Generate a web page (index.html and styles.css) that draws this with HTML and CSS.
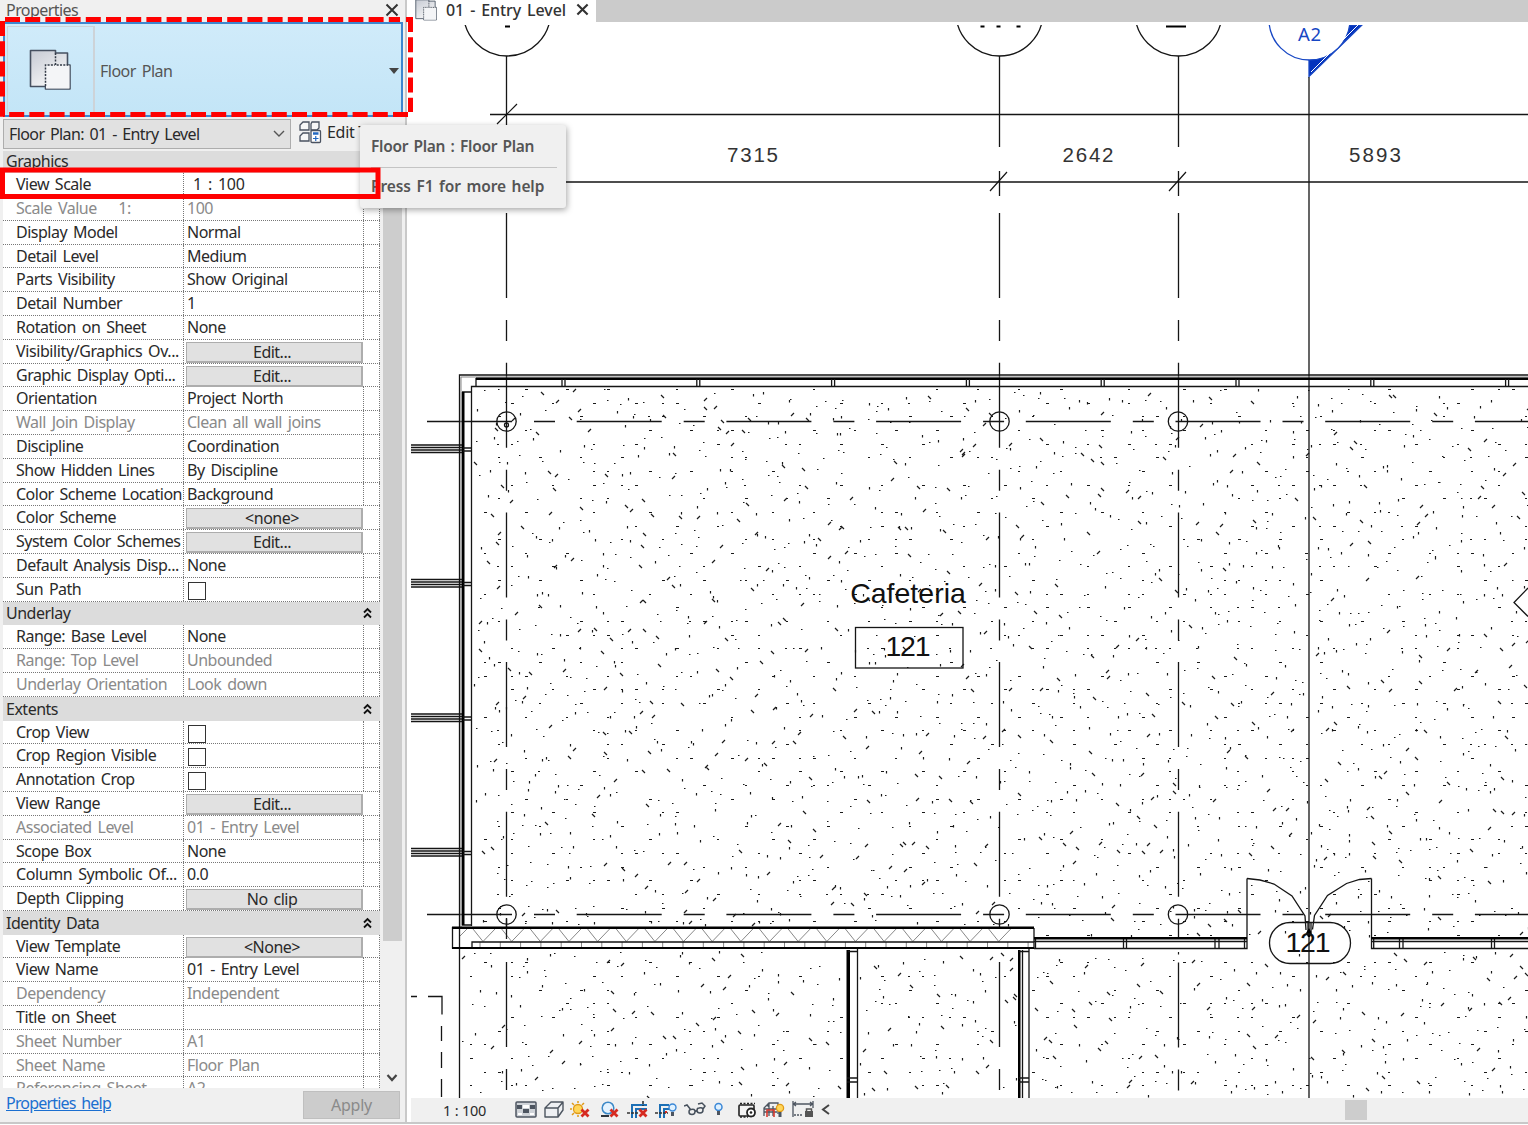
FILE: index.html
```html
<!DOCTYPE html>
<html lang="en">
<head>
<meta charset="utf-8">
<title>01 - Entry Level</title>
<link rel="stylesheet" href="styles.css">
</head>
<body>
<svg width="0" height="0" class="defs">
  <defs>
    <linearGradient id="sheet" x1="0" y1="0" x2="0.6" y2="1"><stop offset="0" stop-color="#c6cad3"/><stop offset="1" stop-color="#fafafa"/></linearGradient>
    <symbol id="plan" viewBox="0 0 42 42">
      <path d="M1.500 1.500h25v2.500h12v12h2.500v24h-24.500v-2.500h-15z" fill="url(#sheet)" stroke="#465060" stroke-width="1.600" stroke-linejoin="round"/>
      <path d="M17 16.500h23.500v23h-23.500z" fill="#f4f5f7"/>
      <path d="M26.500 4v12H39M16.500 37V16H26" fill="none" stroke="#343c48" stroke-width="1.500" stroke-dasharray="2 1.300"/>
    </symbol>
    <symbol id="up" viewBox="0 0 9 12"><path d="M1 5.500l3.500-3.500L8 5.500M1 10.500l3.500-3.500L8 10.500" fill="none" stroke="#111" stroke-width="1.800"/></symbol>
    <symbol id="redx" viewBox="0 0 10 10"><path d="M1.500 1.500l7 7m0-7l-7 7" stroke="#d62a20" stroke-width="2.800"/></symbol>
  </defs>
</svg>
<div class="app">
  <aside class="palette">
    <header class="palette-title"><span>Properties</span>
      <svg width="14" height="14" viewBox="0 0 14 14"><path d="M1.500 1.500l11 11m0-11l-11 11" stroke="#333" stroke-width="2"/></svg>
    </header>
    <div class="type-selector">
      <div class="type-thumb"><svg width="42" height="42"><use href="#plan"/></svg></div>
      <span class="type-name">Floor Plan</span>
      <i class="caret"></i>
    </div>
    <div class="instance-bar">
      <div class="combo"><span>Floor Plan: 01 - Entry Level</span><svg width="12" height="8" viewBox="0 0 12 8"><path d="M1 1l5 5 5-5" fill="none" stroke="#555" stroke-width="1.400"/></svg></div>
      <div class="edit-type">
        <svg width="23" height="23" viewBox="0 0 23 23"><path d="M4 1h6v8H1V4zM13 1h7v6l-2 2h-6V3zM4 12h6v8H1v-5z" fill="#f7f7f7" stroke="#4a5260" stroke-width="1.300"/><rect x="12" y="9.500" width="9.500" height="12" rx="1" fill="#fff" stroke="#4a5260" stroke-width="1.300"/><path d="M14 12.500h5.500" stroke="#2468c0" stroke-width="2.500"/><path d="M14 17.500h5.500M16.750 15v5" stroke="#2468c0" stroke-width="1.200"/></svg>
        <span>Edit Type</span>
      </div>
    </div>
    <div class="grid-area">
      <div class="grid">
        <div class="group first"><span>Graphics</span></div>
        <div class="row"><b>View Scale</b><span class="inset">1 : 100</span><i></i></div>
        <div class="row off"><b class="pre">Scale Value   <em>1:</em></b><span>100</span><i></i></div>
        <div class="row"><b>Display Model</b><span>Normal</span><i></i></div>
        <div class="row"><b>Detail Level</b><span>Medium</span><i></i></div>
        <div class="row"><b>Parts Visibility</b><span>Show Original</span><i></i></div>
        <div class="row"><b>Detail Number</b><span>1</span><i></i></div>
        <div class="row"><b>Rotation on Sheet</b><span>None</span><i></i></div>
        <div class="row"><b class="wide">Visibility/Graphics Ov...</b><span class="btn">Edit...</span><i></i></div>
        <div class="row"><b>Graphic Display Opti...</b><span class="btn">Edit...</span><i></i></div>
        <div class="row"><b>Orientation</b><span>Project North</span><i></i></div>
        <div class="row off"><b>Wall Join Display</b><span>Clean all wall joins</span><i></i></div>
        <div class="row"><b>Discipline</b><span>Coordination</span><i></i></div>
        <div class="row"><b>Show Hidden Lines</b><span>By Discipline</span><i></i></div>
        <div class="row"><b>Color Scheme Location</b><span>Background</span><i></i></div>
        <div class="row"><b>Color Scheme</b><span class="btn">&lt;none&gt;</span><i></i></div>
        <div class="row"><b>System Color Schemes</b><span class="btn">Edit...</span><i></i></div>
        <div class="row"><b>Default Analysis Disp...</b><span>None</span><i></i></div>
        <div class="row"><b>Sun Path</b><span><em class="check"></em></span><i></i></div>
        <div class="group"><span>Underlay</span><svg width="9" height="12"><use href="#up"/></svg></div>
        <div class="row"><b>Range: Base Level</b><span>None</span><i></i></div>
        <div class="row off"><b>Range: Top Level</b><span>Unbounded</span><i></i></div>
        <div class="row off"><b>Underlay Orientation</b><span>Look down</span><i></i></div>
        <div class="group"><span>Extents</span><svg width="9" height="12"><use href="#up"/></svg></div>
        <div class="row"><b>Crop View</b><span><em class="check"></em></span><i></i></div>
        <div class="row"><b>Crop Region Visible</b><span><em class="check"></em></span><i></i></div>
        <div class="row"><b>Annotation Crop</b><span><em class="check"></em></span><i></i></div>
        <div class="row"><b>View Range</b><span class="btn">Edit...</span><i></i></div>
        <div class="row off"><b>Associated Level</b><span>01 - Entry Level</span><i></i></div>
        <div class="row"><b>Scope Box</b><span>None</span><i></i></div>
        <div class="row"><b class="wide">Column Symbolic Of...</b><span>0.0</span><i></i></div>
        <div class="row"><b>Depth Clipping</b><span class="btn">No clip</span><i></i></div>
        <div class="group"><span>Identity Data</span><svg width="9" height="12"><use href="#up"/></svg></div>
        <div class="row"><b>View Template</b><span class="btn">&lt;None&gt;</span><i></i></div>
        <div class="row"><b>View Name</b><span>01 - Entry Level</span><i></i></div>
        <div class="row off"><b>Dependency</b><span>Independent</span><i></i></div>
        <div class="row"><b>Title on Sheet</b><span></span><i></i></div>
        <div class="row off"><b>Sheet Number</b><span>A1</span><i></i></div>
        <div class="row off"><b>Sheet Name</b><span>Floor Plan</span><i></i></div>
        <div class="row off"><b>Referencing Sheet</b><span>A2</span><i></i></div>
      </div>
      <div class="vscroll"><div class="thumb"></div><svg width="12" height="8" viewBox="0 0 12 8"><path d="M1.500 1l4.500 5 4.500-5" fill="none" stroke="#444" stroke-width="2.200"/></svg></div>
    </div>
    <footer class="palette-foot"><a class="help">Properties help</a><span class="apply">Apply</span></footer>
  </aside>

  <main class="view">
    <div class="tabs"><div class="tab">
      <svg width="22" height="22"><use href="#plan"/></svg><span>01 - Entry Level</span>
      <svg width="13" height="13" viewBox="0 0 14 14"><path d="M1.500 1.500l11 11m0-11l-11 11" stroke="#333" stroke-width="2.300"/></svg>
    </div></div>
    <svg class="drawing" width="1117" height="1073" viewBox="411 25 1117 1073">
      <path id="speckle" class="speckle"/>
      <!-- grid heads -->
      <g class="ln">
        <circle cx="507" cy="12.500" r="43.500"/><circle cx="999.500" cy="12.500" r="43.500"/><circle cx="1178.500" cy="12.500" r="43.500"/>
      </g>
      <path class="solid" d="M505 25.500h5v2h-5zM980.500 25.500h4v2h-4zM996.500 25.500h4v2h-4zM1016.500 25.500h4v2h-4zM1166 25.500h20v2h-20z"/>
      <g class="blue">
        <path d="M1309 76.500V25h53z" class="bluefill"/>
        <circle cx="1309.500" cy="19.500" r="40.500"/>
        <path d="M1311 72l47-47" class="gap"/>
      </g>
      <text class="marker" x="1309.500" y="41" text-anchor="middle" textLength="23">A2</text>
      <!-- grid lines and dimensions -->
      <path class="ln" d="M506.500 56v69M999.500 56v91M999.500 171v25M1178.500 56v91M1178.500 171v25M1309 77V1098M490 114.500H1528M565 182H1528"/>
      <path class="thin" d="M497 124l20-20M990 191l17-19M1169 191l17-19"/>
      <g class="ln axis">
        <path d="M506.500 213V927M506.500 962V1098M999.500 213V927M999.500 962V1098M1178.500 213V937M1178.500 962.500V1098" class="v"/>
        <path d="M427 421.500H1528M427 914.500H1528"/>
      </g>
      <g class="dims"><text x="727" y="162" textLength="51">7315</text><text x="1062.500" y="162" textLength="51">2642</text><text x="1349" y="162" textLength="52">5893</text></g>
      <g class="ln">
        <circle cx="506.500" cy="421.500" r="9.700"/><circle cx="999.500" cy="421.500" r="9.700"/><circle cx="1178" cy="421.500" r="9.700"/>
        <circle cx="506.500" cy="914.500" r="9.700"/><circle cx="999.500" cy="914.500" r="9.700"/><circle cx="1178" cy="914.500" r="9.700"/>
        <circle cx="506.500" cy="425" r="2"/>
      </g>
      <!-- exterior walls -->
      <path class="ln" d="M1528 375H459.500V927M1528 386.500H471.500V926M476 378v8M462 392h9M462 925h9"/>
      <path class="gray" d="M1528 377H461V927"/>
      <path class="solid" d="M476 377.500h1052v2.500H476zM461.800 392h2.700v533h-2.700z"/>
      <g id="mullions" class="ln"></g>
      <path class="ln" d="M459.500 948v150M411 996.500h6M428 996.500h14v18M441.500 1026v15M441.500 1052v16M441.500 1079v18"/>
      <!-- insulated wall -->
      <path class="white" d="M452 927h582v22H452z"/>
      <path class="gray" id="insulation"/>
      <path class="ln" d="M452.500 927v21.500M472 948v-6h562M1034 928v20M459.500 927v21M506.500 918v21"/>
      <path class="solid" d="M452 926.500h582v2.500H452zM452 947h582v2H452z"/>
      <!-- storefront walls -->
      <path class="ln" d="M1034 941.500h213M1034 948.500h213v-70M1371.500 941.500H1528M1528 948.500H1371.500v-70M1035.500 938v10M1123.500 938v10M1126.500 938v10M1215 938v10M1219 938v10M1244.500 938v10M1373.700 938v10M1399.500 938v10M1403 938v10M1491.500 938v10M1494.500 938v10"/>
      <path class="solid" d="M1034 937h213v2.500h-213zM1371 937h157v2.500h-157z"/>
      <!-- partitions -->
      <path class="white" d="M847 950h11v148h-11zM1019 950h10v148h-10z"/>
      <path class="solid" d="M846.500 950h3.500v148h-3.500zM1018 950h2.500v148H1018z"/>
      <path class="ln" d="M857.500 949v149M848 951.500h9M847 1078h10M847 1082h10M1022.500 950v148M1029 949v149M1019 951.500h10M1019 1078h10M1019 1082h10"/>
      <!-- door and tags -->
      <path class="ln" d="M1247 878.500l13 1.500 14 4 18 12 13 20 1 14M1371.500 878.500l-12 1-13 4-19 12-13 20-2 14M1308 922v10M1311 922v10"/>
      <rect class="ln" x="1269.500" y="922.500" width="81" height="41" rx="20.500"/>
      <path class="solid" d="M1309 928l3 5-2 4h-2l-2-4z"/>
      <rect class="ln" x="855.500" y="627.500" width="107.500" height="40.500"/>
      <path class="ln" d="M1528 588l-14 14.500 14 14"/>
      <g class="tags"><text x="908" y="602.500">Cafeteria</text><text x="908" y="656" textLength="45">121</text><text x="1308" y="952" textLength="45">121</text></g>
    </svg>
    <div class="viewbar">
      <span class="scale">1 : 100</span>
      <div class="icons">
        <svg width="22" height="17" viewBox="0 0 22 17"><rect x="1" y="1" width="20" height="15" rx="1" fill="#cfd3d8" stroke="#4d5560" stroke-width="1.500"/><path d="M2 4h5v4H2zM15 4h5v4h-5zM8 8h6v4H8z" fill="#4d5560"/><path d="M8 4h6v3H8zM3 12h4v2H3zM15 12h4v2h-4z" fill="#fff"/></svg>
        <svg width="20" height="17" viewBox="0 0 20 17"><path d="M1 7l6-6h12v8l-5 7H1zM1 7h13v9M14 7l5-6" fill="#eef0f3" stroke="#4d5560" stroke-width="1.400" stroke-linejoin="round"/></svg>
        <svg width="21" height="18" viewBox="0 0 21 18"><circle cx="8" cy="8" r="4.500" fill="#ffd65a" stroke="#e09a16" stroke-width="1.300"/><path d="M8 0v2M0 8h2M2 2l2 2M14 2l-2 2M2 14l2-2M8 14v2" stroke="#e09a16" stroke-width="1.500"/><use href="#redx" x="10" y="7" width="10" height="10"/></svg>
        <svg class="sun" width="20" height="18" viewBox="0 0 20 18"><circle cx="8" cy="7" r="5.800" fill="#e4f3ff" stroke="#3b88c7" stroke-width="1.500"/><path d="M1 15h8" stroke="#30363d" stroke-width="2"/><use href="#redx" x="9" y="7" width="10" height="10"/></svg>
        <svg width="22" height="18" viewBox="0 0 22 18"><path d="M5 17V4h15M9 17V8h11" fill="none" stroke="#1c6fb5" stroke-width="2"/><path d="M0 12h11M16 0v5" stroke="#333" stroke-width="1.600" stroke-dasharray="3 1"/><use href="#redx" x="11" y="7" width="10" height="10"/></svg>
        <svg width="22" height="18" viewBox="0 0 22 18"><path d="M5 17V4h9M9 17V8h5" fill="none" stroke="#1c6fb5" stroke-width="2"/><path d="M0 12h13" stroke="#333" stroke-width="1.600" stroke-dasharray="3 1"/><path d="M10 11h2" stroke="#d62a20" stroke-width="2"/><circle cx="17.500" cy="6.500" r="3.500" fill="#dff1ff" stroke="#3b88d7" stroke-width="1.400"/><path d="M16 11h3v4h-3z" fill="#4d5560"/></svg>
        <svg width="22" height="15" viewBox="0 0 22 15"><path d="M0 4l3-1 4 5M7 7.500q4-1 4 2t-3 3-3-2.500 2-2.500zM15 6q4-1 4 2t-3 3-3-2.500 2-2.500zM11 9.500l2-1M19 7l2-3-3-3-4 1" fill="none" stroke="#46505c" stroke-width="1.500"/></svg>
        <svg class="lamp" width="9" height="15" viewBox="0 0 9 15"><circle cx="4.500" cy="5" r="3.500" fill="#dff1ff" stroke="#3b88d7" stroke-width="1.500"/><path d="M3 9h3v4H3z" fill="#4d5560"/></svg>
        <svg width="20" height="16" viewBox="0 0 20 16"><rect x="2" y="3" width="15" height="11" rx="1" fill="#f4f4f4" stroke="#222" stroke-width="1.600"/><path d="M3 1.500h15M3 15h8" stroke="#222" stroke-width="1.600" stroke-dasharray="2 1.500"/><circle cx="14" cy="10.500" r="4" fill="#fff" stroke="#222" stroke-width="1.800"/><circle cx="14" cy="10.500" r="1.300" fill="#222"/></svg>
        <svg width="22" height="18" viewBox="0 0 22 18"><path d="M1 15V7l5-5h9v11M6 2v13M10 5v10M1 8h13M6 2l-1 4M1 11h13" fill="none" stroke="#4d5560" stroke-width="1.300"/><path d="M4 16V9h7v7" fill="none" stroke="#d8382e" stroke-width="1.600"/><circle cx="17" cy="7" r="3.600" fill="#ffd65a" stroke="#e09a16" stroke-width="1.300"/><path d="M15.500 11h3v5h-3z" fill="#4d5560"/></svg>
        <svg width="22" height="17" viewBox="0 0 22 17"><path d="M1 0v16M21 0v7M1 3h20M4 1L1.500 3 4 5M18 1l2.500 2L18 5" fill="none" stroke="#4d5560" stroke-width="1.300"/><path d="M2 14h9" stroke="#4d5560" stroke-width="1.500" stroke-dasharray="2 1"/><rect x="13" y="10" width="8" height="6" fill="#555"/><path d="M14.500 10V8h5v2" fill="none" stroke="#555" stroke-width="1.500"/></svg>
        <svg width="9" height="11" viewBox="0 0 9 11"><path d="M8 1L2 5.500 8 10" fill="none" stroke="#444" stroke-width="2"/></svg>
      </div>
      <div class="hthumb"></div>
    </div>
  </main>
</div>

<div class="tooltip"><p>Floor Plan : Floor Plan</p><p>Press F1 for more help</p></div>
<svg class="marks" width="420" height="205" viewBox="0 0 420 205">
  <path d="M5 19.500H400M406 19.500h7M410.500 17V112M408 114.500H3M2.500 21V117" stroke-dasharray="15 5.200"/>
  <rect x="2.500" y="170" width="375.500" height="26.500"/>
</svg>
<script src="plan.js"></script>
</body>
</html>
```
FILE: styles.css
```css
* { box-sizing: border-box; }
body { margin: 0; background: #fff; font: 16px/20px "Noto Sans", "Noto Sans CJK KR", sans-serif; color: #2a2a2a; overflow: hidden; }
svg { display: block; flex: none; }
.defs { position: absolute; }
.app { display: flex; height: 1124px; border-bottom: 2px solid #c8c8c8; background: #f0f0f0; }

/* properties palette */
.palette { width: 411px; flex: none; display: flex; flex-direction: column; border-right: 4px solid #fff; box-shadow: inset -2px 0 #c9c9c9; padding-left: 3px; background: #f0f0f0; letter-spacing: -.5px; word-spacing: 2.200px; }
.palette-title { height: 22px; display: flex; align-items: center; justify-content: space-between; padding: 0 8px 2px 3px; color: #555; letter-spacing: -.55px; }
.type-selector { width: 400px; height: 95px; flex: none; border: 2px solid #3d87cf; background: linear-gradient(#d0ebfa, #c3e5f7); display: flex; align-items: center; color: #555; }
.type-thumb { width: 88px; height: 88px; border: 1px solid #cdd3d8; border-width: 1px 2px 0 1px; margin-left: 2px; display: flex; align-items: center; justify-content: center; padding-right: 2px; }
.type-name { margin: 2px 0 0 5px; flex: 1; letter-spacing: -.5px; }
.caret { border: 5px solid transparent; border-top: 6px solid #444; border-bottom: 0; margin: 3px 2px 0 0; }
.instance-bar { height: 34px; flex: none; display: flex; padding-top: 2px; }
.combo { width: 288px; height: 30px; border: 1px solid #adadad; background: #e1e1e1; padding: 0 5px 0 5px; display: flex; align-items: center; justify-content: space-between; letter-spacing: -.6px; word-spacing: 2px; }
.edit-type { display: flex; align-items: center; gap: 5px; padding-left: 8px; height: 26px; letter-spacing: -.3px; word-spacing: 0; }

/* parameter grid */
.grid-area { display: flex; height: 937px; flex: none; overflow: hidden; }
.grid { width: 377px; background: #fff; }
.group { height: 23.800px; background: #dcdcdc; display: flex; align-items: center; justify-content: space-between; padding: 0 8px 0 3px; }
.group.first { height: 22.200px; align-items: flex-start; }
.row { height: 23.800px; display: grid; grid-template-columns: 181px 180px 16px; border-bottom: 1px dotted #777; line-height: 23px; white-space: nowrap; }
.row > * { border-right: 1px dotted #777; font-weight: 400; font-style: normal; overflow: hidden; }
.row b { padding-left: 13px; }
.row .wide { letter-spacing: -.4px; }
.row span { padding-left: 3px; }
.row .inset { padding-left: 9px; letter-spacing: -.3px; }
.pre { white-space: pre; }
.pre em { font-style: normal; padding-left: 4px; }
.off { color: #8a8a8a; }
.row .btn { margin: 2px 1px 0 2px; padding: 0 4px 0 0; height: 21px; line-height: 19px; text-align: center; background: #e1e1e1; border: 1px solid #adadad; border-right-width: 2px; border-bottom-width: 2px; }
.check { display: block; width: 18px; height: 18px; margin: 4px 0 0 1px; border: 1.500px solid #333; background: #fff; }
.vscroll { width: 20px; margin-left: 2px; background: #f0f0f0; display: flex; flex-direction: column; align-items: center; justify-content: space-between; padding-bottom: 6px; }
.vscroll .thumb { width: 19px; height: 775px; margin-top: 15px; background: #cdcdcd; }
.palette-foot { display: flex; justify-content: space-between; padding: 3px 7px 0 3px; }
.help { color: #1b6fd0; text-decoration: underline; line-height: 25px; letter-spacing: -.8px; }
.apply { width: 97px; height: 28px; border: 1px solid #bfbfbf; background: #ccc; color: #8a8a8a; text-align: center; line-height: 26px; letter-spacing: -.2px; }

/* document area */
.view { flex: 1; min-width: 0; display: flex; flex-direction: column; background: #fff; }
.tabs { height: 25px; flex: none; background: linear-gradient(#cbcbcb 22px, #fff 22px); }
.tab { width: 185px; height: 22px; background: #fff; display: flex; align-items: center; color: #333; font-weight: 500; padding: 0 0 3px 4px; overflow: hidden; letter-spacing: -.1px; word-spacing: 2px; white-space: nowrap; }
.tab span { margin: 0 9px; width: 121px; }
.drawing { font-family: "Liberation Sans", Arial, sans-serif; }
.ln, .thin, .gray, .blue { fill: none; stroke: #151515; stroke-width: 1.300; }
.thin { stroke-width: 1.200; }
.gray { stroke: #888; stroke-width: 1; }
.solid { fill: #000; }
.white { fill: #fff; }
.axis path { stroke-dasharray: 85 22 21 21.700; }
.speckle { fill: none; stroke: #1a1a1a; stroke-width: 1.200; }
.blue { stroke: #1747c4; }
.blue circle { fill: #fff; }
.bluefill { fill: #0433bd; }
.gap { stroke: #fff; stroke-width: 1; }
.marker { font: 18.500px "Noto Sans", sans-serif; fill: #1747c4; }
.dims { font-size: 20.500px; fill: #333; }
.tags { font-size: 28.500px; text-anchor: middle; fill: #111; }
.viewbar { height: 24px; display: flex; align-items: center; background: #f0f0f0; padding-left: 32px; }
.scale { width: 72px; font-size: 14.500px; letter-spacing: -.2px; }
.icons { display: flex; align-items: center; gap: 6.700px; width: 830px; height: 24px; padding-bottom: 1px; }
.icons .sun { margin-left: 2px; }
.icons .lamp { margin: 0 7px 0 1px; }
.hthumb { width: 22px; height: 20px; background: #cdcdcd; }

/* floating layers */
.tooltip { position: absolute; left: 360px; top: 125px; width: 206px; height: 83px; background: #f0f0f0; border-radius: 3px; box-shadow: 1px 2px 6px rgba(0,0,0,.35); padding: 0 9px 0 11px; font-weight: 600; font-size: 15.500px; color: #555; letter-spacing: -.3px; word-spacing: 1.700px; white-space: nowrap; }
.tooltip p { margin: 0; height: 42px; line-height: 42px; }
.tooltip p + p { border-top: 1px solid #c4c4c4; line-height: 36px; letter-spacing: -.1px; }
.marks { position: absolute; left: 0; top: 0; fill: none; stroke: #f00; stroke-width: 5; }
```
FILE: plan.js
```js
// Concrete fill pattern: a regular lattice of short dashes with loose aggregate between.
let seed = 90211;
const rnd = () => (seed = (seed * 16807) % 2147483647) / 2147483647;

function inside(x, y) {
  if (y > 388 && y < 936 && x > 473) return !(x < 1036 && y > 924);
  return y > 950 && y < 1097 && x > 461 && !(x > 844 && x < 859) && !(x > 1016 && x < 1030);
}

let d = '';
const offsets = [33, 19, 5.7];
for (let k = 0; k < 53; k++) {
  const y = Math.round(389 + k * 13.65) + 0.5;
  for (let n = 0; n < 28; n++) {
    const x = Math.round(410 + offsets[k % 3] + n * 41.1);
    if (rnd() < 0.6 && inside(x, y)) d += `M${x} ${y}h${rnd() < 0.6 ? 3 : 2}`;
    if (rnd() < 0.15 && inside(x - 14, y)) d += `M${x - 14} ${y}h2`;
  }
}
// One piece of aggregate per 21 px cell, jittered, so the fill stays even.
for (let cy = 388; cy < 1098; cy += 21) {
  for (let cx = 460; cx < 1528; cx += 21) {
    for (let i = 0; i < 2; i++) {
      const x = Math.round(cx + rnd() * 21), y = Math.round(cy + rnd() * 21), t = rnd();
      if (rnd() < 0.55 && i || !inside(x, y)) continue;
      if (t < 0.45) d += `M${x} ${y + 0.5}h1.5`;
      else if (t < 0.78) d += `M${x + 0.5} ${y}v2.5`;
      else if (t < 0.9) d += `M${x} ${y}l3 3`;
      else d += `M${x} ${y + 3}l3-3`;
    }
  }
}
document.getElementById('speckle').setAttribute('d', d);

// Curtain wall mullions, one every 134.8 px.
let m = '';
for (let i = 0; i < 8; i++) {
  const x = 562 + i * 134.8;
  m += `<path d="M${x} 379v8M${x + 3} 379v8"/>`;
}
for (let i = 0; i < 4; i++) {
  const y = 445 + i * 134.5;
  m += `<path d="M411 ${y}h51M411 ${y + 2.5}h51M411 ${y + 5}h51M411 ${y + 7.5}h51M463 ${y + 3}h8M463 ${y + 6}h8"/>`;
}
document.getElementById('mullions').innerHTML = m;

// Insulation zigzag and the cavity blocks beneath it.
let z = 'M467 929l-8 8';
for (let x = 483; x < 1020; x += 28.65) z += `M${x - 10} 929l10 12.500 12-12.500`;
for (let x = 480; x < 1034; x += 20.3) z += `M${x} 942v5`;
document.getElementById('insulation').setAttribute('d', z);
```
